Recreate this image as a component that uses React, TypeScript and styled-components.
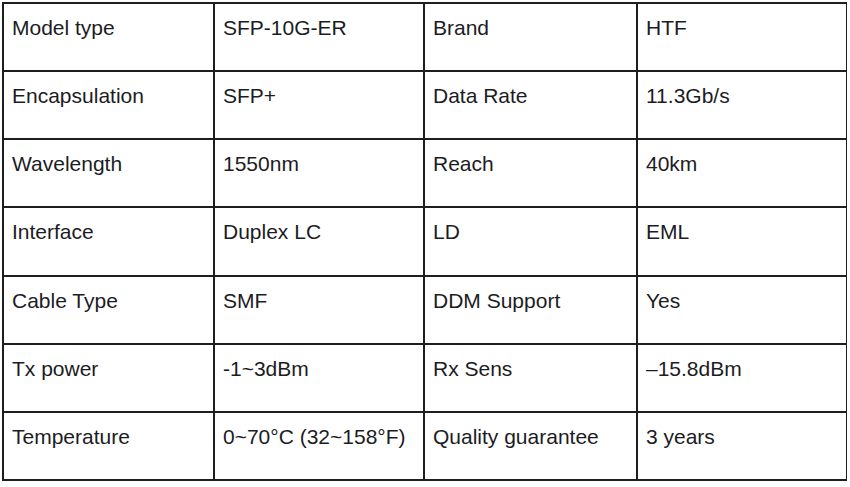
import styled, { createGlobalStyle } from 'styled-components'

const GlobalStyle = createGlobalStyle`
  html, body {
    margin: 0;
    padding: 0;
    background: #ffffff;
  }
`

const Page = styled.div`
  width: 850px;
  height: 487px;
  padding: 2px 0 0 2px;
  box-sizing: border-box;
  background: #ffffff;
`

const SpecGrid = styled.div`
  display: grid;
  grid-template-columns: 209px 208px 211px 208px;
  grid-template-rows: repeat(7, 1fr);
  gap: 2px;
  padding: 2px;
  width: 845px;
  height: 479px;
  box-sizing: border-box;
  background: #1e1e1e;
`

const Cell = styled.div`
  background: #ffffff;
  padding: 12px 8px 0 8px;
  font-family: 'Liberation Sans', Arial, sans-serif;
  font-size: 21px;
  line-height: 24px;
  color: #1c1c24;
  white-space: nowrap;
`

const specs: [string, string, string, string][] = [
  ['Model type', 'SFP-10G-ER', 'Brand', 'HTF'],
  ['Encapsulation', 'SFP+', 'Data Rate', '11.3Gb/s'],
  ['Wavelength', '1550nm', 'Reach', '40km'],
  ['Interface', 'Duplex LC', 'LD', 'EML'],
  ['Cable Type', 'SMF', 'DDM Support', 'Yes'],
  ['Tx power', '-1~3dBm', 'Rx Sens', '–15.8dBm'],
  ['Temperature', '0~70°C (32~158°F)', 'Quality guarantee', '3 years'],
]

export default function App() {
  return (
    <>
      <GlobalStyle />
      <Page>
        <SpecGrid>
          {specs.map((row) =>
            row.map((text, i) => <Cell key={row[0] + i}>{text}</Cell>)
          )}
        </SpecGrid>
      </Page>
    </>
  )
}
